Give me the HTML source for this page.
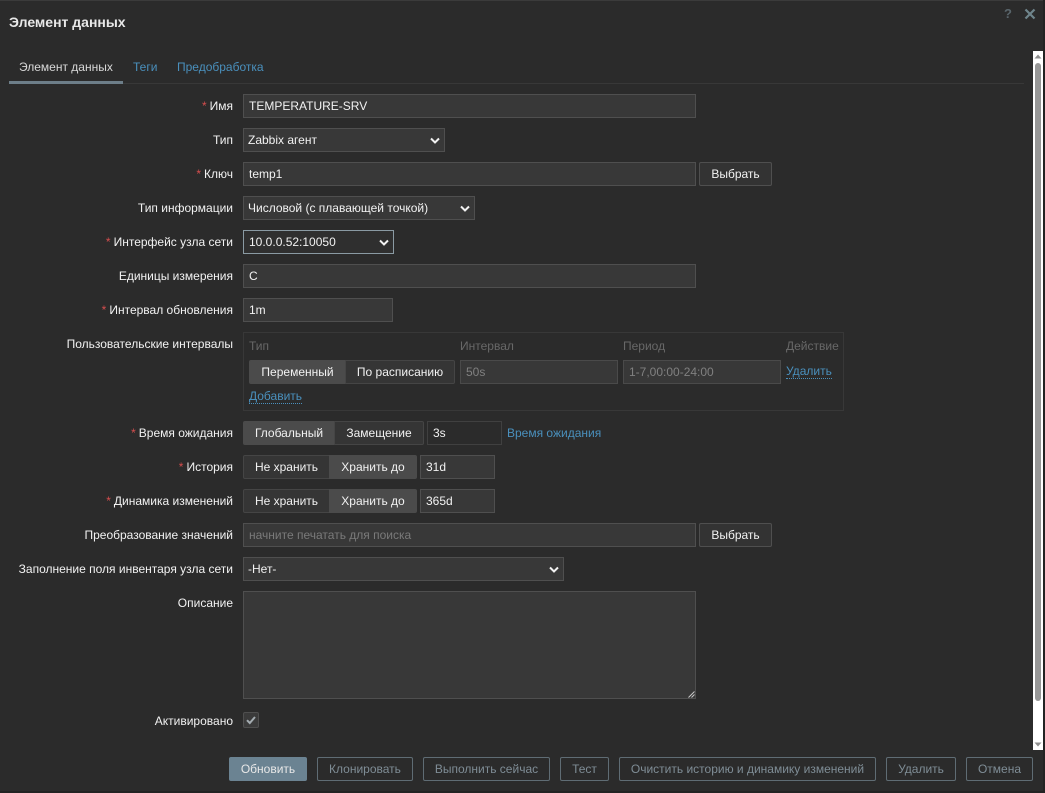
<!DOCTYPE html>
<html><head><meta charset="utf-8"><style>
html,body{margin:0;padding:0;background:#2b2b2b;width:1045px;height:793px;overflow:hidden}
body{position:relative;font:12px/14px "Liberation Sans",Arial,sans-serif;color:#f2f2f2}
.a{position:absolute;white-space:nowrap;box-sizing:border-box}
.l{position:absolute;right:812px;white-space:nowrap;line-height:14px;color:#f2f2f2}
.l i{font-style:normal;color:#d64e4e;margin-right:3px}
.f{position:absolute;box-sizing:border-box;height:24px;background:#383838;border:1px solid #4f4f4f;padding:4px 5px 0;line-height:14px;white-space:nowrap;color:#f2f2f2}
.s{padding-left:4px}
.s svg{position:absolute;right:3px;top:8px}
.b{position:absolute;box-sizing:border-box;height:24px;border:1px solid #4f4f4f;border-radius:2px;line-height:22px;text-align:center;white-space:nowrap;color:#f2f2f2;background:#333}
.g{position:absolute;box-sizing:border-box;height:24px;border:1px solid #454545;background:#353535;line-height:22px;text-align:center;white-space:nowrap;color:#f2f2f2}
.on{background:#4b4b4b;border-color:#4b4b4b}
.ft{position:absolute;top:757px;box-sizing:border-box;height:24px;border:1px solid #5f6c74;border-radius:2px;line-height:22px;text-align:center;white-space:nowrap;color:#7f8d96;background:#2b2b2b}
.lnk{color:#4a90bd}
.h{position:absolute;top:339px;color:#686868;line-height:14px}
.dis{background:#383838;color:#808080;border-color:#4a4a4a}
</style></head><body>
<div class="a" style="left:0;top:0;width:1045px;height:1px;background:#3b3b3b"></div>
<div class="a" style="left:1043px;top:0;width:2px;height:793px;background:#232323"></div>
<div class="a" style="left:0;top:791px;width:1045px;height:2px;background:#232323"></div>
<div class="a" style="left:9px;top:14px;font-size:14px;line-height:16px;font-weight:bold;color:#e8e8e8">Элемент данных</div>
<div class="a" style="left:1004px;top:7px;font-size:13px;font-weight:bold;color:#59656b">?</div>
<svg class="a" style="left:1024px;top:8px" width="12" height="12" viewBox="0 0 12 12"><path d="M1.5 1.5L10.5 10.5M10.5 1.5L1.5 10.5" stroke="#6f858c" stroke-width="2.2" fill="none"/></svg>

<div class="a" style="left:9px;top:83px;width:1015px;height:1px;background:#383838"></div>
<div class="a" style="left:9px;top:81px;width:114px;height:3px;background:#6d7e89"></div>
<div class="a" style="left:19px;top:60px;color:#d8d8d8">Элемент данных</div>
<div class="a lnk" style="left:133px;top:60px">Теги</div>
<div class="a lnk" style="left:177px;top:60px">Предобработка</div>

<div class="l" style="top:99px"><i>*</i>Имя</div>
<div class="f" style="left:243px;top:94px;width:453px">TEMPERATURE-SRV</div>

<div class="l" style="top:133px">Тип</div>
<div class="f s" style="left:243px;top:128px;width:202px">Zabbix агент<svg width="12" height="8" viewBox="0 0 12 8"><path d="M2 1.5L6 5.5L10 1.5" stroke="#f2f2f2" stroke-width="2" fill="none"/></svg></div>

<div class="l" style="top:167px"><i>*</i>Ключ</div>
<div class="f" style="left:243px;top:162px;width:453px">temp1</div>
<div class="b" style="left:699px;top:162px;width:73px">Выбрать</div>

<div class="l" style="top:201px">Тип информации</div>
<div class="f s" style="left:243px;top:196px;width:232px">Числовой (с плавающей точкой)<svg width="12" height="8" viewBox="0 0 12 8"><path d="M2 1.5L6 5.5L10 1.5" stroke="#f2f2f2" stroke-width="2" fill="none"/></svg></div>

<div class="l" style="top:235px"><i>*</i>Интерфейс узла сети</div>
<div class="f s" style="left:243px;top:230px;width:151px;border-color:#8a9aa3;background:#2f2f2f;padding-left:5px">10.0.0.52:10050<svg width="12" height="8" viewBox="0 0 12 8"><path d="M2 1.5L6 5.5L10 1.5" stroke="#f2f2f2" stroke-width="2" fill="none"/></svg></div>

<div class="l" style="top:269px">Единицы измерения</div>
<div class="f" style="left:243px;top:264px;width:453px">C</div>

<div class="l" style="top:303px"><i>*</i>Интервал обновления</div>
<div class="f" style="left:243px;top:298px;width:150px">1m</div>

<div class="l" style="top:337px">Пользовательские интервалы</div>
<div class="a" style="left:243px;top:332px;width:601px;height:79px;border:1px solid #383838"></div>
<div class="h" style="left:249px">Тип</div>
<div class="h" style="left:460px">Интервал</div>
<div class="h" style="left:623px">Период</div>
<div class="h" style="left:786px">Действие</div>
<div class="g on" style="left:249px;top:360px;width:97px;border-radius:2px 0 0 2px">Переменный</div>
<div class="g" style="left:345px;top:360px;width:110px;border-radius:0 2px 2px 0">По расписанию</div>
<div class="f dis" style="left:460px;top:360px;width:158px">50s</div>
<div class="f dis" style="left:623px;top:360px;width:158px">1-7,00:00-24:00</div>
<div class="a lnk" style="left:786px;top:365px;border-bottom:1px dotted #4a90bd;line-height:13px">Удалить</div>
<div class="a lnk" style="left:249px;top:390px;border-bottom:1px dotted #4a90bd;line-height:13px">Добавить</div>

<div class="l" style="top:426px"><i>*</i>Время ожидания</div>
<div class="g on" style="left:243px;top:421px;width:92px;border-radius:2px 0 0 2px">Глобальный</div>
<div class="g" style="left:334px;top:421px;width:90px;border-radius:0 2px 2px 0">Замещение</div>
<div class="f" style="left:427px;top:421px;width:75px;background:#2b2b2b;border-color:#404040">3s</div>
<div class="a lnk" style="left:507px;top:426px">Время ожидания</div>

<div class="l" style="top:460px"><i>*</i>История</div>
<div class="g" style="left:243px;top:455px;width:87px;border-radius:2px 0 0 2px">Не хранить</div>
<div class="g on" style="left:329px;top:455px;width:88px;border-radius:0 2px 2px 0">Хранить до</div>
<div class="f" style="left:420px;top:455px;width:75px">31d</div>

<div class="l" style="top:494px"><i>*</i>Динамика изменений</div>
<div class="g" style="left:243px;top:489px;width:87px;border-radius:2px 0 0 2px">Не хранить</div>
<div class="g on" style="left:329px;top:489px;width:88px;border-radius:0 2px 2px 0">Хранить до</div>
<div class="f" style="left:420px;top:489px;width:75px">365d</div>

<div class="l" style="top:528px">Преобразование значений</div>
<div class="f" style="left:243px;top:523px;width:453px;color:#7a7a7a">начните печатать для поиска</div>
<div class="b" style="left:699px;top:523px;width:73px">Выбрать</div>

<div class="l" style="top:562px">Заполнение поля инвентаря узла сети</div>
<div class="f s" style="left:243px;top:557px;width:321px">-Нет-<svg width="12" height="8" viewBox="0 0 12 8"><path d="M2 1.5L6 5.5L10 1.5" stroke="#f2f2f2" stroke-width="2" fill="none"/></svg></div>

<div class="l" style="top:596px">Описание</div>
<div class="f" style="left:243px;top:591px;width:453px;height:108px"></div>
<svg class="a" style="left:688px;top:691px" width="7" height="7" viewBox="0 0 7 7"><path d="M0.5 6.5L6.5 0.5M3.5 6.5L6.5 3.5" stroke="#c8c8c8" stroke-width="1" fill="none"/></svg>

<div class="l" style="top:714px">Активировано</div>
<div class="a" style="left:243px;top:712px;width:16px;height:16px;background:#3a3a3a;border:1px solid #4f4f4f;border-radius:2px"></div>
<svg class="a" style="left:245px;top:714px" width="12" height="12" viewBox="0 0 12 12"><path d="M2 6.2L4.8 9L10 3" stroke="#a3abb0" stroke-width="2" fill="none"/></svg>

<div class="a" style="left:1033px;top:51px;width:10px;height:699px;background:#fff"></div>
<div class="a" style="left:1035px;top:63px;width:6px;height:638px;background:#979797;border-radius:3px"></div>
<svg class="a" style="left:1034px;top:54px" width="8" height="5" viewBox="0 0 8 5"><path d="M4 0.5L7.5 4.5H0.5Z" fill="#8f8f8f"/></svg>
<svg class="a" style="left:1034px;top:742px" width="8" height="5" viewBox="0 0 8 5"><path d="M0.5 0.5H7.5L4 4.5Z" fill="#8f8f8f"/></svg>

<div class="ft" style="left:229px;width:78px;background:#6b8392;border-color:#6b8392;color:#e8e8e8">Обновить</div>
<div class="ft" style="left:317px;width:96px">Клонировать</div>
<div class="ft" style="left:423px;width:127px">Выполнить сейчас</div>
<div class="ft" style="left:560px;width:49px">Тест</div>
<div class="ft" style="left:619px;width:257px">Очистить историю и динамику изменений</div>
<div class="ft" style="left:886px;width:70px">Удалить</div>
<div class="ft" style="left:966px;width:67px">Отмена</div>
</body></html>
